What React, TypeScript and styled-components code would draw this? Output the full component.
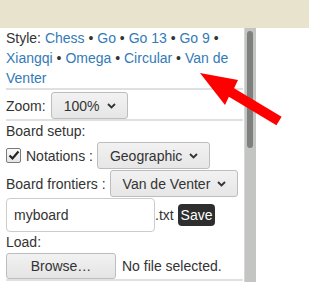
import React from "react";
import styled, { createGlobalStyle } from "styled-components";

const Global = createGlobalStyle`
  html, body { margin: 0; padding: 0; background: #fff; }
  body { font-family: "Liberation Sans", Arial, sans-serif; font-size: 14px; line-height: 20px; color: #333; }
  * { box-sizing: border-box; }
`;

const Page = styled.div`
  position: relative;
  width: 309px;
  height: 282px;
  overflow: hidden;
  display: flex;
  flex-direction: column;
`;

const TopBand = styled.div`
  height: 28px;
  background: #e8e3cc;
  flex: none;
`;

const Body = styled.div`
  flex: 1;
  display: flex;
  min-height: 0;
`;

const Panel = styled.div`
  width: 244px;
  padding: 0 1px 0 6px;
  overflow: hidden;
  flex: none;
`;

const Section = styled.div<{ $pt?: number }>`
  border-bottom: 2px solid #e0e0e0;
  padding-top: ${(p) => p.$pt ?? 0}px;
`;

const Para = styled.div`
  line-height: 20px;
`;

const Link = styled.a`
  color: #337ab7;
  text-decoration: none;
`;

const Row = styled.div<{ $gap?: number; $h?: number }>`
  display: flex;
  align-items: center;
  gap: ${(p) => p.$gap ?? 4}px;
  height: ${(p) => p.$h ?? 27}px;
`;

const Drop = styled.button`
  display: inline-flex;
  align-items: center;
  justify-content: space-between;
  gap: 7px;
  height: 27px;
  padding: 0 11px 0 12px;
  font: inherit;
  color: #333;
  background: linear-gradient(#f2f2f2, #e6e6e6);
  border: 1px solid #bdbdbd;
  border-radius: 3px;
  white-space: nowrap;
`;

const Chevron = () => (
  <svg width="9" height="6" viewBox="0 0 9 6">
    <polyline points="1,1 4.5,4.5 8,1" fill="none" stroke="#333" strokeWidth="1.8" />
  </svg>
);

const Check = styled.span`
  width: 15px;
  height: 15px;
  flex: none;
  border: 1px solid #7a7a7a;
  border-radius: 2px;
  background: linear-gradient(#fafafa, #e6e6e6);
  display: inline-flex;
  align-items: center;
  justify-content: center;
`;

const Label = styled.span<{ $ml?: number }>`
  margin-left: ${(p) => p.$ml ?? 0}px;
  white-space: nowrap;
`;

const TextInput = styled.input`
  width: 149px;
  height: 34px;
  padding: 0 7px;
  font: inherit;
  color: #333;
  border: 1px solid #ccc;
  border-radius: 4px;
  background: #fff;
  outline: none;
`;

const Badge = styled.span`
  background: #2e2e2e;
  color: #fff;
  border-radius: 4px;
  padding: 1px 3px;
  line-height: 20px;
`;

const PlainButton = styled.button`
  width: 110px;
  height: 26px;
  font: inherit;
  color: #333;
  background: linear-gradient(#f2f2f2, #e4e4e4);
  border: 1px solid #bdbdbd;
  border-radius: 3px;
  padding: 0;
`;

const Track = styled.div`
  width: 12px;
  flex: none;
  background: #c3c5c3;
  border-left: 1px solid #d6d6d6;
  padding: 3px 0 0 2px;
`;

const Thumb = styled.div`
  width: 6px;
  height: 117px;
  border-radius: 3px;
  background: #7f7f7f;
`;

const Arrow = styled.svg`
  position: absolute;
  left: 0;
  top: 0;
  pointer-events: none;
`;

export default function App() {
  return (
    <>
      <Global />
      <Page>
        <TopBand />
        <Body>
          <Panel>
            <Section>
              <Para>
                {"Style: "}
                <Link>Chess</Link>
                {" • "}
                <Link>Go</Link>
                {" • "}
                <Link>Go 13</Link>
                {" • "}
                <Link>Go 9</Link>
                {" • "}
                <Link>Xiangqi</Link>
                {" • "}
                <Link>Omega</Link>
                {" • "}
                <Link>Circular</Link>
                {" • "}
                <Link>Van de Venter</Link>
              </Para>
            </Section>
            <Section $pt={2}>
              <Row $gap={5}>
                <Label>Zoom:</Label>
                <Drop>
                  100% <Chevron />
                </Drop>
              </Row>
            </Section>
            <Section>
              <Para>Board setup:</Para>
              <Row $h={29} $gap={4}>
                <Check>
                  <svg width="12" height="11" viewBox="0 0 12 11">
                    <polyline points="1.5,5.5 4.5,8.5 10.5,1.5" fill="none" stroke="#222" strokeWidth="2.2" />
                  </svg>
                </Check>
                <Label $ml={1}>Notations :</Label>
                <Drop>
                  Geographic <Chevron />
                </Drop>
              </Row>
              <Row $h={27} $gap={4}>
                <Label>Board frontiers :</Label>
                <Drop>
                  Van de Venter <Chevron />
                </Drop>
              </Row>
              <Row $h={34} $gap={0} style={{ marginTop: 1 }}>
                <TextInput defaultValue="myboard" />
                <Label>.txt&nbsp;</Label>
                <Badge>Save</Badge>
              </Row>
              <Para>Load:</Para>
              <Row $h={27} $gap={6}>
                <PlainButton>Browse…</PlainButton>
                <Label>No file selected.</Label>
              </Row>
            </Section>
          </Panel>
          <Track>
            <Thumb />
          </Track>
        </Body>
        <Arrow width="309" height="282" viewBox="0 0 309 282">
          <polygon
            points="200,73 238,80 234.1,88.2 281.6,116.7 276.4,125.3 228.9,96.8 225,105"
            fill="#ff0000"
          />
        </Arrow>
      </Page>
    </>
  );
}
